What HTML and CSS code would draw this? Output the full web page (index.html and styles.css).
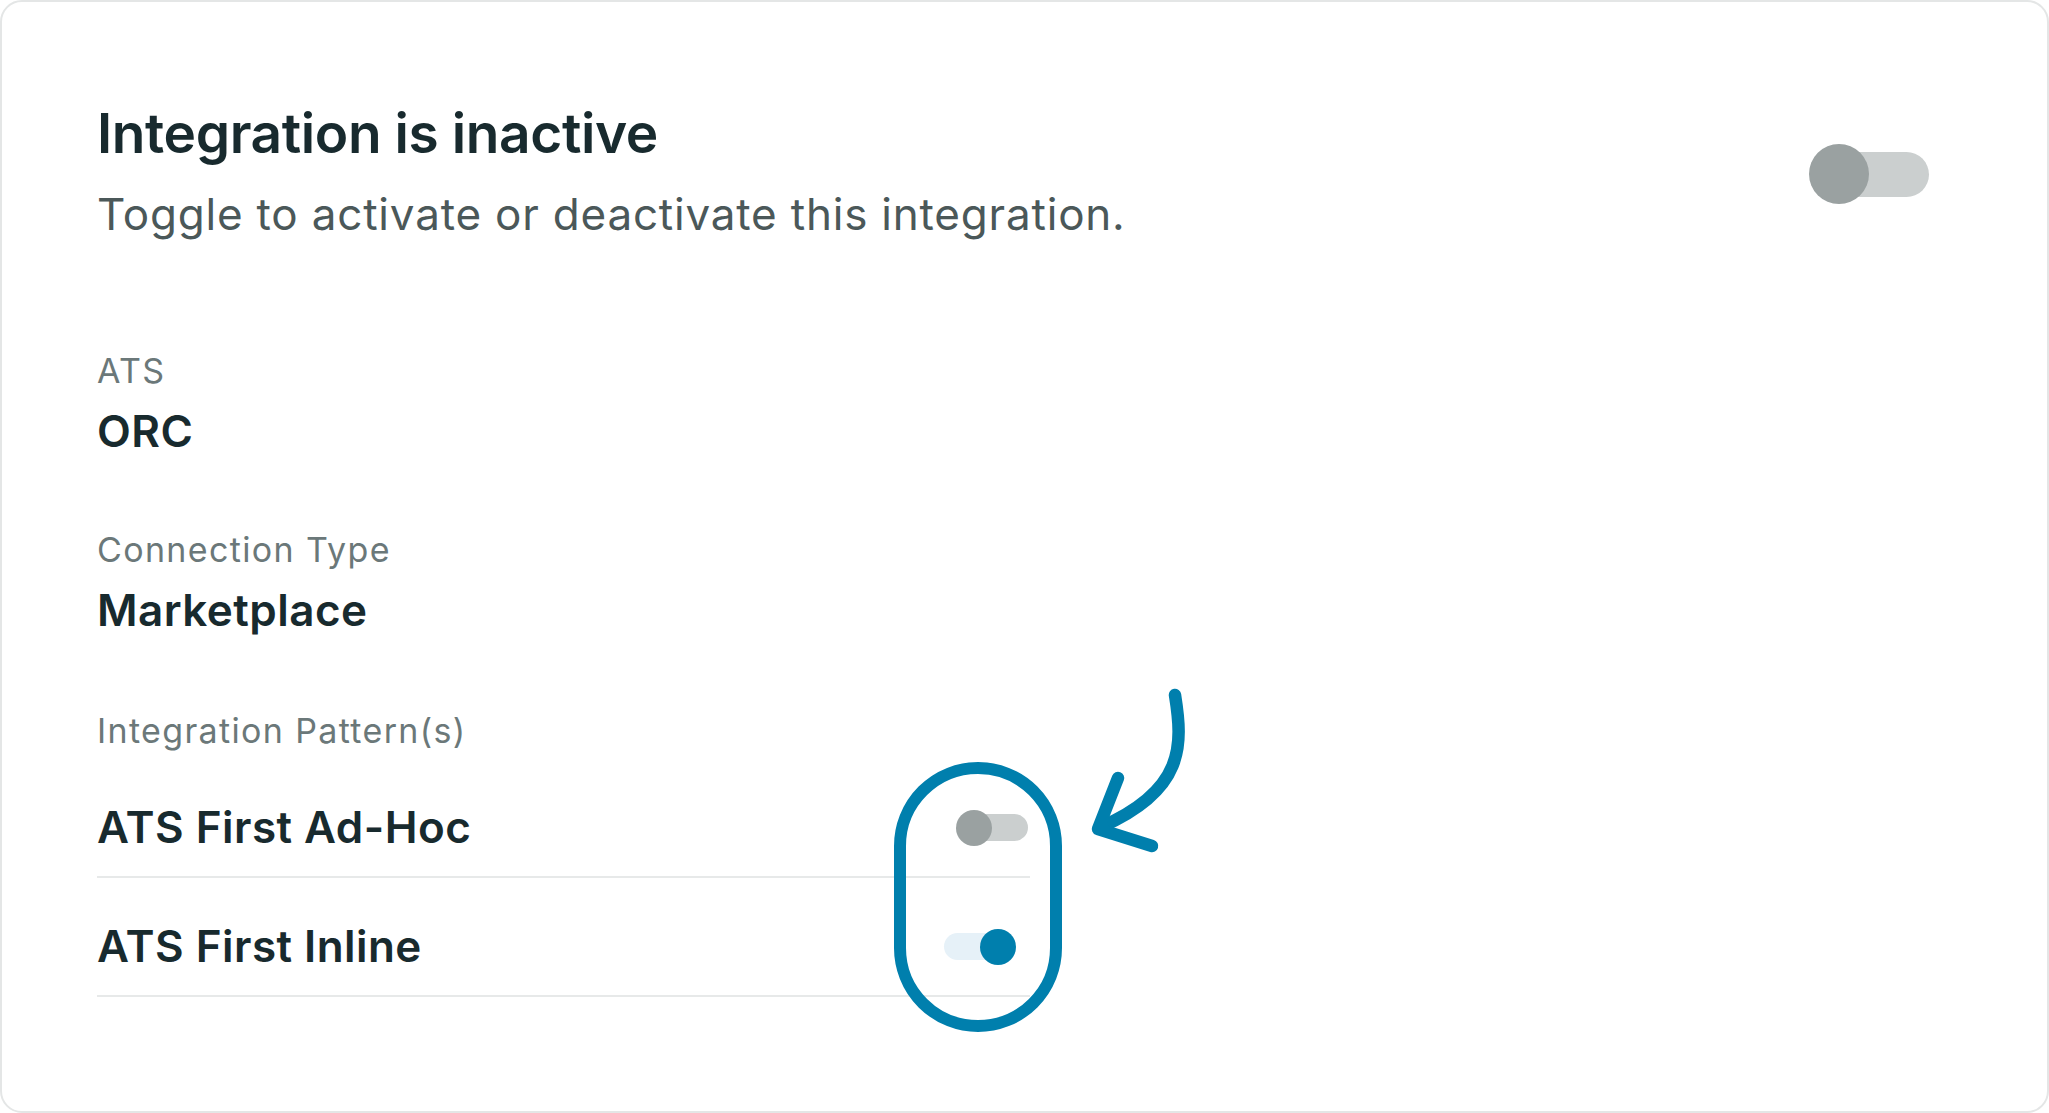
FILE: index.html
```html
<!DOCTYPE html>
<html lang="en">
<head>
<meta charset="utf-8">
<title>Integration settings</title>
<link rel="stylesheet" href="styles.css">
</head>
<body>
<div class="card">
  <div class="header">
    <div class="header-text">
      <h1 class="title">Integration is inactive</h1>
      <p class="subtitle">Toggle to activate or deactivate this integration.</p>
    </div>
    <div class="switch switch-lg" role="switch" aria-checked="false">
      <span class="track"></span>
      <span class="knob"></span>
    </div>
  </div>

  <div class="field">
    <div class="label">ATS</div>
    <div class="value">ORC</div>
  </div>
  <div class="field">
    <div class="label">Connection Type</div>
    <div class="value">Marketplace</div>
  </div>
  <div class="field field-patterns">
    <div class="label">Integration Pattern(s)</div>
    <div class="patterns">
      <div class="pattern-row">
        <span class="value">ATS First Ad-Hoc</span>
        <div class="switch switch-sm off first" role="switch" aria-checked="false">
          <span class="track"></span>
          <span class="knob"></span>
        </div>
      </div>
      <div class="pattern-row">
        <span class="value">ATS First Inline</span>
        <div class="switch switch-sm on second" role="switch" aria-checked="true">
          <span class="track"></span>
          <span class="knob"></span>
        </div>
      </div>
    </div>
  </div>

  <svg class="annotation" width="2049" height="1113" viewBox="0 0 2049 1113" aria-hidden="true">
    <rect x="900" y="768" width="156" height="258" rx="78" ry="78" fill="none" stroke="#007fad" stroke-width="12"/>
    <path d="M1175 695 C1183 745 1185 790 1101 827" fill="none" stroke="#007fad" stroke-width="12.5" stroke-linecap="round"/>
    <path d="M1118 778 L1098 829 L1152 846" fill="none" stroke="#007fad" stroke-width="12.5" stroke-linecap="round" stroke-linejoin="round"/>
  </svg>
</div>
</body>
</html>
```

FILE: styles.css
```css
html, body {
  margin: 0;
  padding: 0;
  background: #ffffff;
}

body {
  font-family: Inter, "Noto Sans", "Liberation Sans", sans-serif;
  color: #1a2b2f;
}

.card {
  position: relative;
  box-sizing: border-box;
  width: 2049px;
  height: 1113px;
  border: 2px solid #e4e6e6;
  border-radius: 22px;
  padding: 98px 118px 0 95px;
  overflow: hidden;
}

.header {
  display: flex;
  justify-content: space-between;
  align-items: flex-start;
}

.title {
  margin: 0;
  font-size: 55px;
  line-height: 66px;
  font-weight: 600;
  color: #182a2e;
  letter-spacing: -0.4px;
}

.subtitle {
  margin: 22px 0 0;
  font-size: 44px;
  line-height: 53px;
  font-weight: 400;
  color: #4b5859;
  letter-spacing: 0.8px;
}

.switch {
  position: relative;
  flex: none;
}

.switch .track,
.switch .knob {
  position: absolute;
  display: block;
}

.switch-lg {
  width: 120px;
  height: 60px;
  margin-top: 44px;
}

.switch-lg .track {
  left: 4px;
  right: 0;
  top: 7.5px;
  height: 45px;
  border-radius: 23px;
  background: #cbcfcf;
}

.switch-lg .knob {
  left: 0;
  top: 0;
  width: 60px;
  height: 60px;
  border-radius: 50%;
  background: #9aa1a1;
}

.field {
  margin-top: 71px;
}

.header + .field {
  margin-top: 109px;
}

.label {
  font-size: 34px;
  line-height: 41px;
  font-weight: 400;
  color: #6b7879;
  letter-spacing: 1.35px;
}

.value {
  margin-top: 14px;
  font-size: 44px;
  line-height: 53px;
  font-weight: 600;
  color: #182a2e;
  letter-spacing: 0.45px;
}

.field-patterns {
  margin-top: 73px;
}

.patterns {
  width: 933px;
  margin-top: 8px;
}

.pattern-row {
  display: flex;
  align-items: center;
  justify-content: space-between;
  padding: 42px 0 22px;
  border-bottom: 2.5px solid #e7e9e9;
}

.pattern-row .value {
  margin-top: 0;
}

.switch-sm {
  width: 72px;
  height: 36px;
}

.switch-sm .track {
  top: 4.5px;
  height: 27px;
  border-radius: 14px;
}

.switch-sm .knob {
  top: 0;
  width: 36px;
  height: 36px;
  border-radius: 50%;
}

.switch-sm.off .track {
  left: 2px;
  right: 0;
  background: #cbcfcf;
}

.switch-sm.off .knob {
  left: 0;
  background: #9aa1a1;
}

.switch-sm.on .track {
  left: 0;
  right: 2px;
  background: #e6f1f8;
}

.switch-sm.on .knob {
  right: 0;
  background: #007fad;
}

.switch-sm.first {
  margin-right: 2px;
}

.switch-sm.second {
  margin-right: 14px;
}

.annotation {
  position: absolute;
  left: -2px;
  top: -2px;
  pointer-events: none;
}
```
